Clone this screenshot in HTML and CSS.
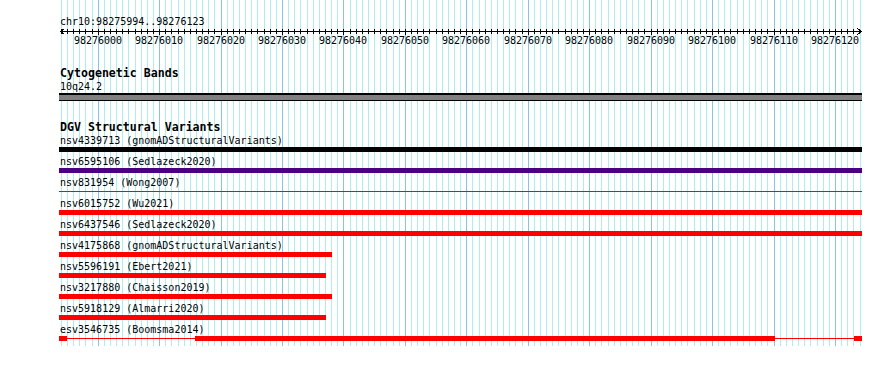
FILE: index.html
```html
<!DOCTYPE html>
<html lang="en">
<head>
<meta charset="utf-8">
<title>chr10:98275994..98276123</title>
<link rel="stylesheet" href="styles.css">
</head>
<body>
<div class="panel">
  <svg class="grid" width="890" height="346" viewBox="0 0 890 346" aria-hidden="true">
    <path class="grid-minor" d="M61.5 0V346M67.5 0V346M73.5 0V346M79.5 0V346M85.5 0V346M92.5 0V346M104.5 0V346M110.5 0V346M116.5 0V346M122.5 0V346M128.5 0V346M135.5 0V346M141.5 0V346M147.5 0V346M153.5 0V346M165.5 0V346M171.5 0V346M178.5 0V346M184.5 0V346M190.5 0V346M196.5 0V346M202.5 0V346M208.5 0V346M214.5 0V346M227.5 0V346M233.5 0V346M239.5 0V346M245.5 0V346M251.5 0V346M257.5 0V346M264.5 0V346M270.5 0V346M276.5 0V346M288.5 0V346M294.5 0V346M300.5 0V346M307.5 0V346M313.5 0V346M319.5 0V346M325.5 0V346M331.5 0V346M337.5 0V346M350.5 0V346M356.5 0V346M362.5 0V346M368.5 0V346M374.5 0V346M380.5 0V346M386.5 0V346M393.5 0V346M399.5 0V346M411.5 0V346M417.5 0V346M423.5 0V346M429.5 0V346M436.5 0V346M442.5 0V346M448.5 0V346M454.5 0V346M460.5 0V346M472.5 0V346M479.5 0V346M485.5 0V346M491.5 0V346M497.5 0V346M503.5 0V346M509.5 0V346M515.5 0V346M522.5 0V346M534.5 0V346M540.5 0V346M546.5 0V346M552.5 0V346M558.5 0V346M565.5 0V346M571.5 0V346M577.5 0V346M583.5 0V346M595.5 0V346M601.5 0V346M608.5 0V346M614.5 0V346M620.5 0V346M626.5 0V346M632.5 0V346M638.5 0V346M644.5 0V346M657.5 0V346M663.5 0V346M669.5 0V346M675.5 0V346M681.5 0V346M687.5 0V346M694.5 0V346M700.5 0V346M706.5 0V346M718.5 0V346M724.5 0V346M730.5 0V346M737.5 0V346M743.5 0V346M749.5 0V346M755.5 0V346M761.5 0V346M767.5 0V346M780.5 0V346M786.5 0V346M792.5 0V346M798.5 0V346M804.5 0V346M810.5 0V346M817.5 0V346M823.5 0V346M829.5 0V346M841.5 0V346M847.5 0V346M853.5 0V346M860.5 0V346"/>
    <path class="grid-major" d="M98.5 0V346M159.5 0V346M221.5 0V346M282.5 0V346M343.5 0V346M405.5 0V346M466.5 0V346M528.5 0V346M589.5 0V346M651.5 0V346M712.5 0V346M774.5 0V346M835.5 0V346"/>
  </svg>

  <div class="content">
    <div class="title">chr10:98275994..98276123</div>

    <svg class="ruler" width="890" height="20" viewBox="0 0 890 20">
      <path class="ruler-line" d="M60 3.5H862M60.5 3.5L64.5 0.5M60.5 3.5L64.5 6.5M861.5 3.5L857.5 0.5M861.5 3.5L857.5 6.5"/>
      <path class="ruler-ticks" d="M61.5 1V6M67.5 1V6M73.5 1V6M79.5 1V6M85.5 1V6M92.5 1V6M104.5 1V6M110.5 1V6M116.5 1V6M122.5 1V6M128.5 1V6M135.5 1V6M141.5 1V6M147.5 1V6M153.5 1V6M165.5 1V6M171.5 1V6M178.5 1V6M184.5 1V6M190.5 1V6M196.5 1V6M202.5 1V6M208.5 1V6M214.5 1V6M227.5 1V6M233.5 1V6M239.5 1V6M245.5 1V6M251.5 1V6M257.5 1V6M264.5 1V6M270.5 1V6M276.5 1V6M288.5 1V6M294.5 1V6M300.5 1V6M307.5 1V6M313.5 1V6M319.5 1V6M325.5 1V6M331.5 1V6M337.5 1V6M350.5 1V6M356.5 1V6M362.5 1V6M368.5 1V6M374.5 1V6M380.5 1V6M386.5 1V6M393.5 1V6M399.5 1V6M411.5 1V6M417.5 1V6M423.5 1V6M429.5 1V6M436.5 1V6M442.5 1V6M448.5 1V6M454.5 1V6M460.5 1V6M472.5 1V6M479.5 1V6M485.5 1V6M491.5 1V6M497.5 1V6M503.5 1V6M509.5 1V6M515.5 1V6M522.5 1V6M534.5 1V6M540.5 1V6M546.5 1V6M552.5 1V6M558.5 1V6M565.5 1V6M571.5 1V6M577.5 1V6M583.5 1V6M595.5 1V6M601.5 1V6M608.5 1V6M614.5 1V6M620.5 1V6M626.5 1V6M632.5 1V6M638.5 1V6M644.5 1V6M657.5 1V6M663.5 1V6M669.5 1V6M675.5 1V6M681.5 1V6M687.5 1V6M694.5 1V6M700.5 1V6M706.5 1V6M718.5 1V6M724.5 1V6M730.5 1V6M737.5 1V6M743.5 1V6M749.5 1V6M755.5 1V6M761.5 1V6M767.5 1V6M780.5 1V6M786.5 1V6M792.5 1V6M798.5 1V6M804.5 1V6M810.5 1V6M817.5 1V6M823.5 1V6M829.5 1V6M841.5 1V6M847.5 1V6M853.5 1V6M98.5 1V7M159.5 1V7M221.5 1V7M282.5 1V7M343.5 1V7M405.5 1V7M466.5 1V7M528.5 1V7M589.5 1V7M651.5 1V7M712.5 1V7M774.5 1V7M835.5 1V7"/>
      <text class="tick-label" x="98" y="15.5">98276000</text>
      <text class="tick-label" x="159" y="15.5">98276010</text>
      <text class="tick-label" x="221" y="15.5">98276020</text>
      <text class="tick-label" x="282" y="15.5">98276030</text>
      <text class="tick-label" x="343" y="15.5">98276040</text>
      <text class="tick-label" x="405" y="15.5">98276050</text>
      <text class="tick-label" x="466" y="15.5">98276060</text>
      <text class="tick-label" x="528" y="15.5">98276070</text>
      <text class="tick-label" x="589" y="15.5">98276080</text>
      <text class="tick-label" x="651" y="15.5">98276090</text>
      <text class="tick-label" x="712" y="15.5">98276100</text>
      <text class="tick-label" x="774" y="15.5">98276110</text>
      <text class="tick-label" x="835" y="15.5">98276120</text>
    </svg>

    <section class="track cyto">
      <div class="track-name">Cytogenetic Bands</div>
      <div class="label band-label">10q24.2</div>
      <div class="band"></div>
    </section>

    <section class="track dgv">
      <div class="track-name">DGV Structural Variants</div>
      <div class="features">
        <div class="feature">
          <div class="label">nsv4339713 (gnomADStructuralVariants)</div>
          <div class="bar black" style="width:803px"></div>
        </div>
        <div class="feature">
          <div class="label">nsv6595106 (Sedlazeck2020)</div>
          <div class="bar indigo" style="width:803px"></div>
        </div>
        <div class="feature">
          <div class="label">nsv831954 (Wong2007)</div>
          <div class="bar red thin" style="width:803px"></div>
        </div>
        <div class="feature">
          <div class="label">nsv6015752 (Wu2021)</div>
          <div class="bar red" style="width:803px"></div>
        </div>
        <div class="feature">
          <div class="label">nsv6437546 (Sedlazeck2020)</div>
          <div class="bar red" style="width:803px"></div>
        </div>
        <div class="feature">
          <div class="label">nsv4175868 (gnomADStructuralVariants)</div>
          <div class="bar red" style="width:273px"></div>
        </div>
        <div class="feature">
          <div class="label">nsv5596191 (Ebert2021)</div>
          <div class="bar red" style="width:267px"></div>
        </div>
        <div class="feature">
          <div class="label">nsv3217880 (Chaisson2019)</div>
          <div class="bar red" style="width:273px"></div>
        </div>
        <div class="feature">
          <div class="label">nsv5918129 (Almarri2020)</div>
          <div class="bar red" style="width:267px"></div>
        </div>
        <div class="feature">
          <div class="label">esv3546735 (Boomsma2014)</div>
          <div class="segments">
            <div class="seg red" style="width:8px"></div>
            <div class="seg red thin" style="width:128px"></div>
            <div class="seg red" style="width:580px"></div>
            <div class="seg red thin" style="width:79px"></div>
            <div class="seg red" style="width:8px"></div>
          </div>
        </div>
      </div>
    </section>
  </div>
</div>
</body>
</html>
```

FILE: styles.css
```css
html, body {
  margin: 0;
  padding: 0;
  background: #ffffff;
}

.panel {
  position: relative;
  width: 890px;
  height: 378px;
  overflow: hidden;
  font-family: "DejaVu Sans Mono", "Liberation Mono", monospace;
  color: #000000;
}

.grid {
  position: absolute;
  left: 0;
  top: 0;
  display: block;
}

.grid-minor {
  stroke: #afeeee;
  stroke-width: 1;
  fill: none;
  shape-rendering: crispEdges;
}

.grid-major {
  stroke: #87c4ea;
  stroke-width: 1;
  fill: none;
  shape-rendering: crispEdges;
}

.content {
  position: relative;
  padding-top: 16px;
}

.title {
  margin-left: 60px;
  font-size: 10px;
  line-height: 12px;
  height: 12px;
  white-space: nowrap;
}

.ruler {
  display: block;
}

.ruler-line,
.ruler-ticks {
  stroke: #000000;
  stroke-width: 1;
  fill: none;
  shape-rendering: crispEdges;
}

.tick-label {
  font-family: "DejaVu Sans Mono", "Liberation Mono", monospace;
  font-size: 10px;
  text-anchor: middle;
  fill: #000000;
}

.track {
  margin-left: 59px;
  width: 803px;
}

.track-name {
  font-weight: bold;
  font-size: 11.6px;
  line-height: 13px;
  height: 13px;
  padding-left: 1px;
  white-space: nowrap;
}

.label {
  font-size: 10px;
  line-height: 12px;
  height: 12px;
  padding-left: 1px;
  white-space: nowrap;
}

.cyto {
  margin-top: 19px;
}

.band-label {
  margin-top: 1px;
}

.band {
  height: 8px;
  box-sizing: border-box;
  border-top: 2px solid #000000;
  border-bottom: 1px solid #000000;
  background: #808080;
}

.dgv {
  margin-top: 20px;
}

.features {
  padding-top: 1px;
}

.feature {
  height: 21px;
}

.bar {
  height: 5px;
}

.bar.thin {
  height: 1px;
  margin: 2px 0;
}

.segments {
  display: flex;
  align-items: center;
  height: 5px;
}

.seg {
  height: 5px;
  flex: none;
}

.seg.thin {
  height: 1px;
}

.black { background: #000000; }
.indigo { background: #4b0082; }
.red { background: #ff0000; }
```
